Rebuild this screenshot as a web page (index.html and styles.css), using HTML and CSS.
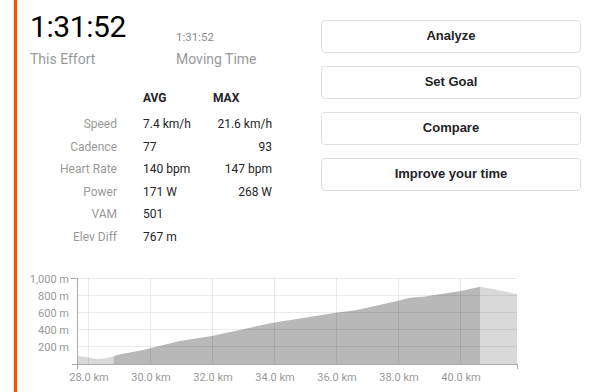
FILE: index.html
```html
<!DOCTYPE html>
<html lang="en">
<head>
    <meta charset="UTF-8">
    <meta name="viewport" content="width=device-width, initial-scale=1.0">
    <title>Segment Effort</title>
    <link rel="stylesheet" href="styles.css">
</head>
<body>
    <div class="page">
        <div class="effort">
            <div class="top">
                <div class="summary">
                    <div class="stats">
                        <div class="stat first">
                            <div class="stat-value big">1:31:52</div>
                            <div class="stat-label">This Effort</div>
                        </div>
                        <div class="stat">
                            <div class="stat-value small">1:31:52</div>
                            <div class="stat-label">Moving Time</div>
                        </div>
                    </div>

                    <div class="details">
                        <span></span>
                        <span class="head">AVG</span>
                        <span class="head">MAX</span>

                        <span class="label">Speed</span>
                        <span>7.4 km/h</span>
                        <span class="max">21.6 km/h</span>

                        <span class="label">Cadence</span>
                        <span>77</span>
                        <span class="max">93</span>

                        <span class="label">Heart Rate</span>
                        <span>140 bpm</span>
                        <span class="max">147 bpm</span>

                        <span class="label">Power</span>
                        <span>171 W</span>
                        <span class="max">268 W</span>

                        <span class="label">VAM</span>
                        <span>501</span>
                        <span></span>

                        <span class="label">Elev Diff</span>
                        <span>767 m</span>
                        <span></span>
                    </div>
                </div>

                <div class="actions">
                    <button class="btn">Analyze</button>
                    <button class="btn">Set Goal</button>
                    <button class="btn">Compare</button>
                    <button class="btn">Improve your time</button>
                </div>
            </div>

            <!-- Elevation profile -->
            <div class="chart">
                <svg class="elevation" width="585" height="120" viewBox="17 272 585 120">
                    <path class="area-light" d="M77 364 L77 356 L86 357 L96 359 L104 358.5 L113.5 356.5 L113.5 364 Z"/>
                    <path class="area-dark" d="M113.5 364 L113.5 356.5 L118 354.7 L143 350 L180 341 L213 335.7 L273 322.7 L300 318.5 L336 312.7 L357 310 L398 300.7 L410 297.7 L423 296.7 L461 291 L480 286.7 L480 364 Z"/>
                    <path class="area-light" d="M480 364 L480 286.7 L493 289 L517 294.3 L517 364 Z"/>

                    <g class="grid">
                        <line x1="77" y1="278.5" x2="517" y2="278.5"/>
                        <line x1="77" y1="295.5" x2="517" y2="295.5"/>
                        <line x1="77" y1="312.5" x2="517" y2="312.5"/>
                        <line x1="77" y1="329.5" x2="517" y2="329.5"/>
                        <line x1="77" y1="346.5" x2="517" y2="346.5"/>
                        <line x1="88.5" y1="278" x2="88.5" y2="364"/>
                        <line x1="150.5" y1="278" x2="150.5" y2="364"/>
                        <line x1="212.5" y1="278" x2="212.5" y2="364"/>
                        <line x1="274.5" y1="278" x2="274.5" y2="364"/>
                        <line x1="336.5" y1="278" x2="336.5" y2="364"/>
                        <line x1="398.5" y1="278" x2="398.5" y2="364"/>
                        <line x1="460.5" y1="278" x2="460.5" y2="364"/>
                    </g>

                    <g class="axis">
                        <line x1="77.5" y1="278" x2="77.5" y2="369"/>
                        <line x1="71" y1="278.5" x2="77" y2="278.5"/>
                        <line x1="72" y1="364.5" x2="517.5" y2="364.5"/>
                        <line x1="517.5" y1="364" x2="517.5" y2="369"/>
                    </g>

                    <g class="y-labels">
                        <text x="69" y="283">1,000 m</text>
                        <text x="69" y="300">800 m</text>
                        <text x="69" y="317">600 m</text>
                        <text x="69" y="334">400 m</text>
                        <text x="69" y="351">200 m</text>
                    </g>

                    <g class="x-labels">
                        <text x="89" y="381">28.0 km</text>
                        <text x="151" y="381">30.0 km</text>
                        <text x="213" y="381">32.0 km</text>
                        <text x="275" y="381">34.0 km</text>
                        <text x="337" y="381">36.0 km</text>
                        <text x="399" y="381">38.0 km</text>
                        <text x="461" y="381">40.0 km</text>
                    </g>
                </svg>
            </div>
        </div>
    </div>
</body>
</html>
```

FILE: styles.css
```css
* {
    margin: 0;
    padding: 0;
    box-sizing: border-box;
}

body {
    background: #fff;
    color: #242428;
    font-family: Roboto, 'Liberation Sans', sans-serif;
    height: 392px;
    overflow: hidden;
}

.page {
    margin-left: 13px;
    border-left: 1px solid #e2e2e2;
}

.effort {
    border-left: 3px solid #fc5200;
    height: 392px;
}

.top {
    display: flex;
    justify-content: space-between;
}

.summary {
    padding-left: 13px;
    padding-top: 10px;
}

/* Times */
.stats {
    display: flex;
}

.stat {
    display: flex;
    flex-direction: column;
}

.stat.first {
    width: 146px;
}

.stat-value {
    height: 34px;
    display: flex;
    align-items: flex-end;
}

.stat-value.big {
    font-size: 30px;
    font-weight: 400;
    line-height: 34px;
    color: #000;
    letter-spacing: -0.4px;
}

.stat-value.small {
    font-size: 11.5px;
    line-height: 14px;
    color: #8a8a8a;
}

.stat-label {
    margin-top: 6px;
    font-size: 14px;
    line-height: 18px;
    color: #999;
}

/* Avg / max table */
.details {
    margin-top: 19px;
    display: grid;
    grid-template-columns: 113px 70px 59px;
    grid-template-rows: 26px repeat(6, 22.6px);
    font-size: 12px;
    line-height: 22.6px;
}

.details .head {
    font-weight: bold;
    line-height: 22px;
    align-self: start;
}

.details .label {
    color: #999;
    text-align: right;
    padding-right: 26px;
}

.details .max {
    text-align: right;
}

/* Buttons */
.actions {
    width: 260px;
    margin-right: 21px;
    padding-top: 20px;
    display: flex;
    flex-direction: column;
    gap: 13px;
}

.btn {
    height: 33px;
    padding-bottom: 3px;
    background: #fff;
    border: 1px solid #dfdfe8;
    border-radius: 4px;
    font-family: 'Liberation Sans', Arial, sans-serif;
    font-size: 13px;
    font-weight: bold;
    color: #242428;
    cursor: pointer;
}

.btn:hover {
    background: #f7f7fa;
}

/* Elevation chart */
.chart {
    margin-top: 23px;
}

.elevation {
    display: block;
}

.area-light {
    fill: #d9d9d9;
}

.area-dark {
    fill: #b8b8b8;
}

.grid line {
    stroke: rgba(0, 0, 0, 0.08);
    stroke-width: 1;
}

.axis line {
    stroke: #aaa;
    stroke-width: 1;
}

.y-labels text,
.x-labels text {
    font-family: Roboto, 'Liberation Sans', sans-serif;
    font-size: 11px;
    fill: #999;
}

.y-labels text {
    text-anchor: end;
}

.x-labels text {
    text-anchor: middle;
}
```
